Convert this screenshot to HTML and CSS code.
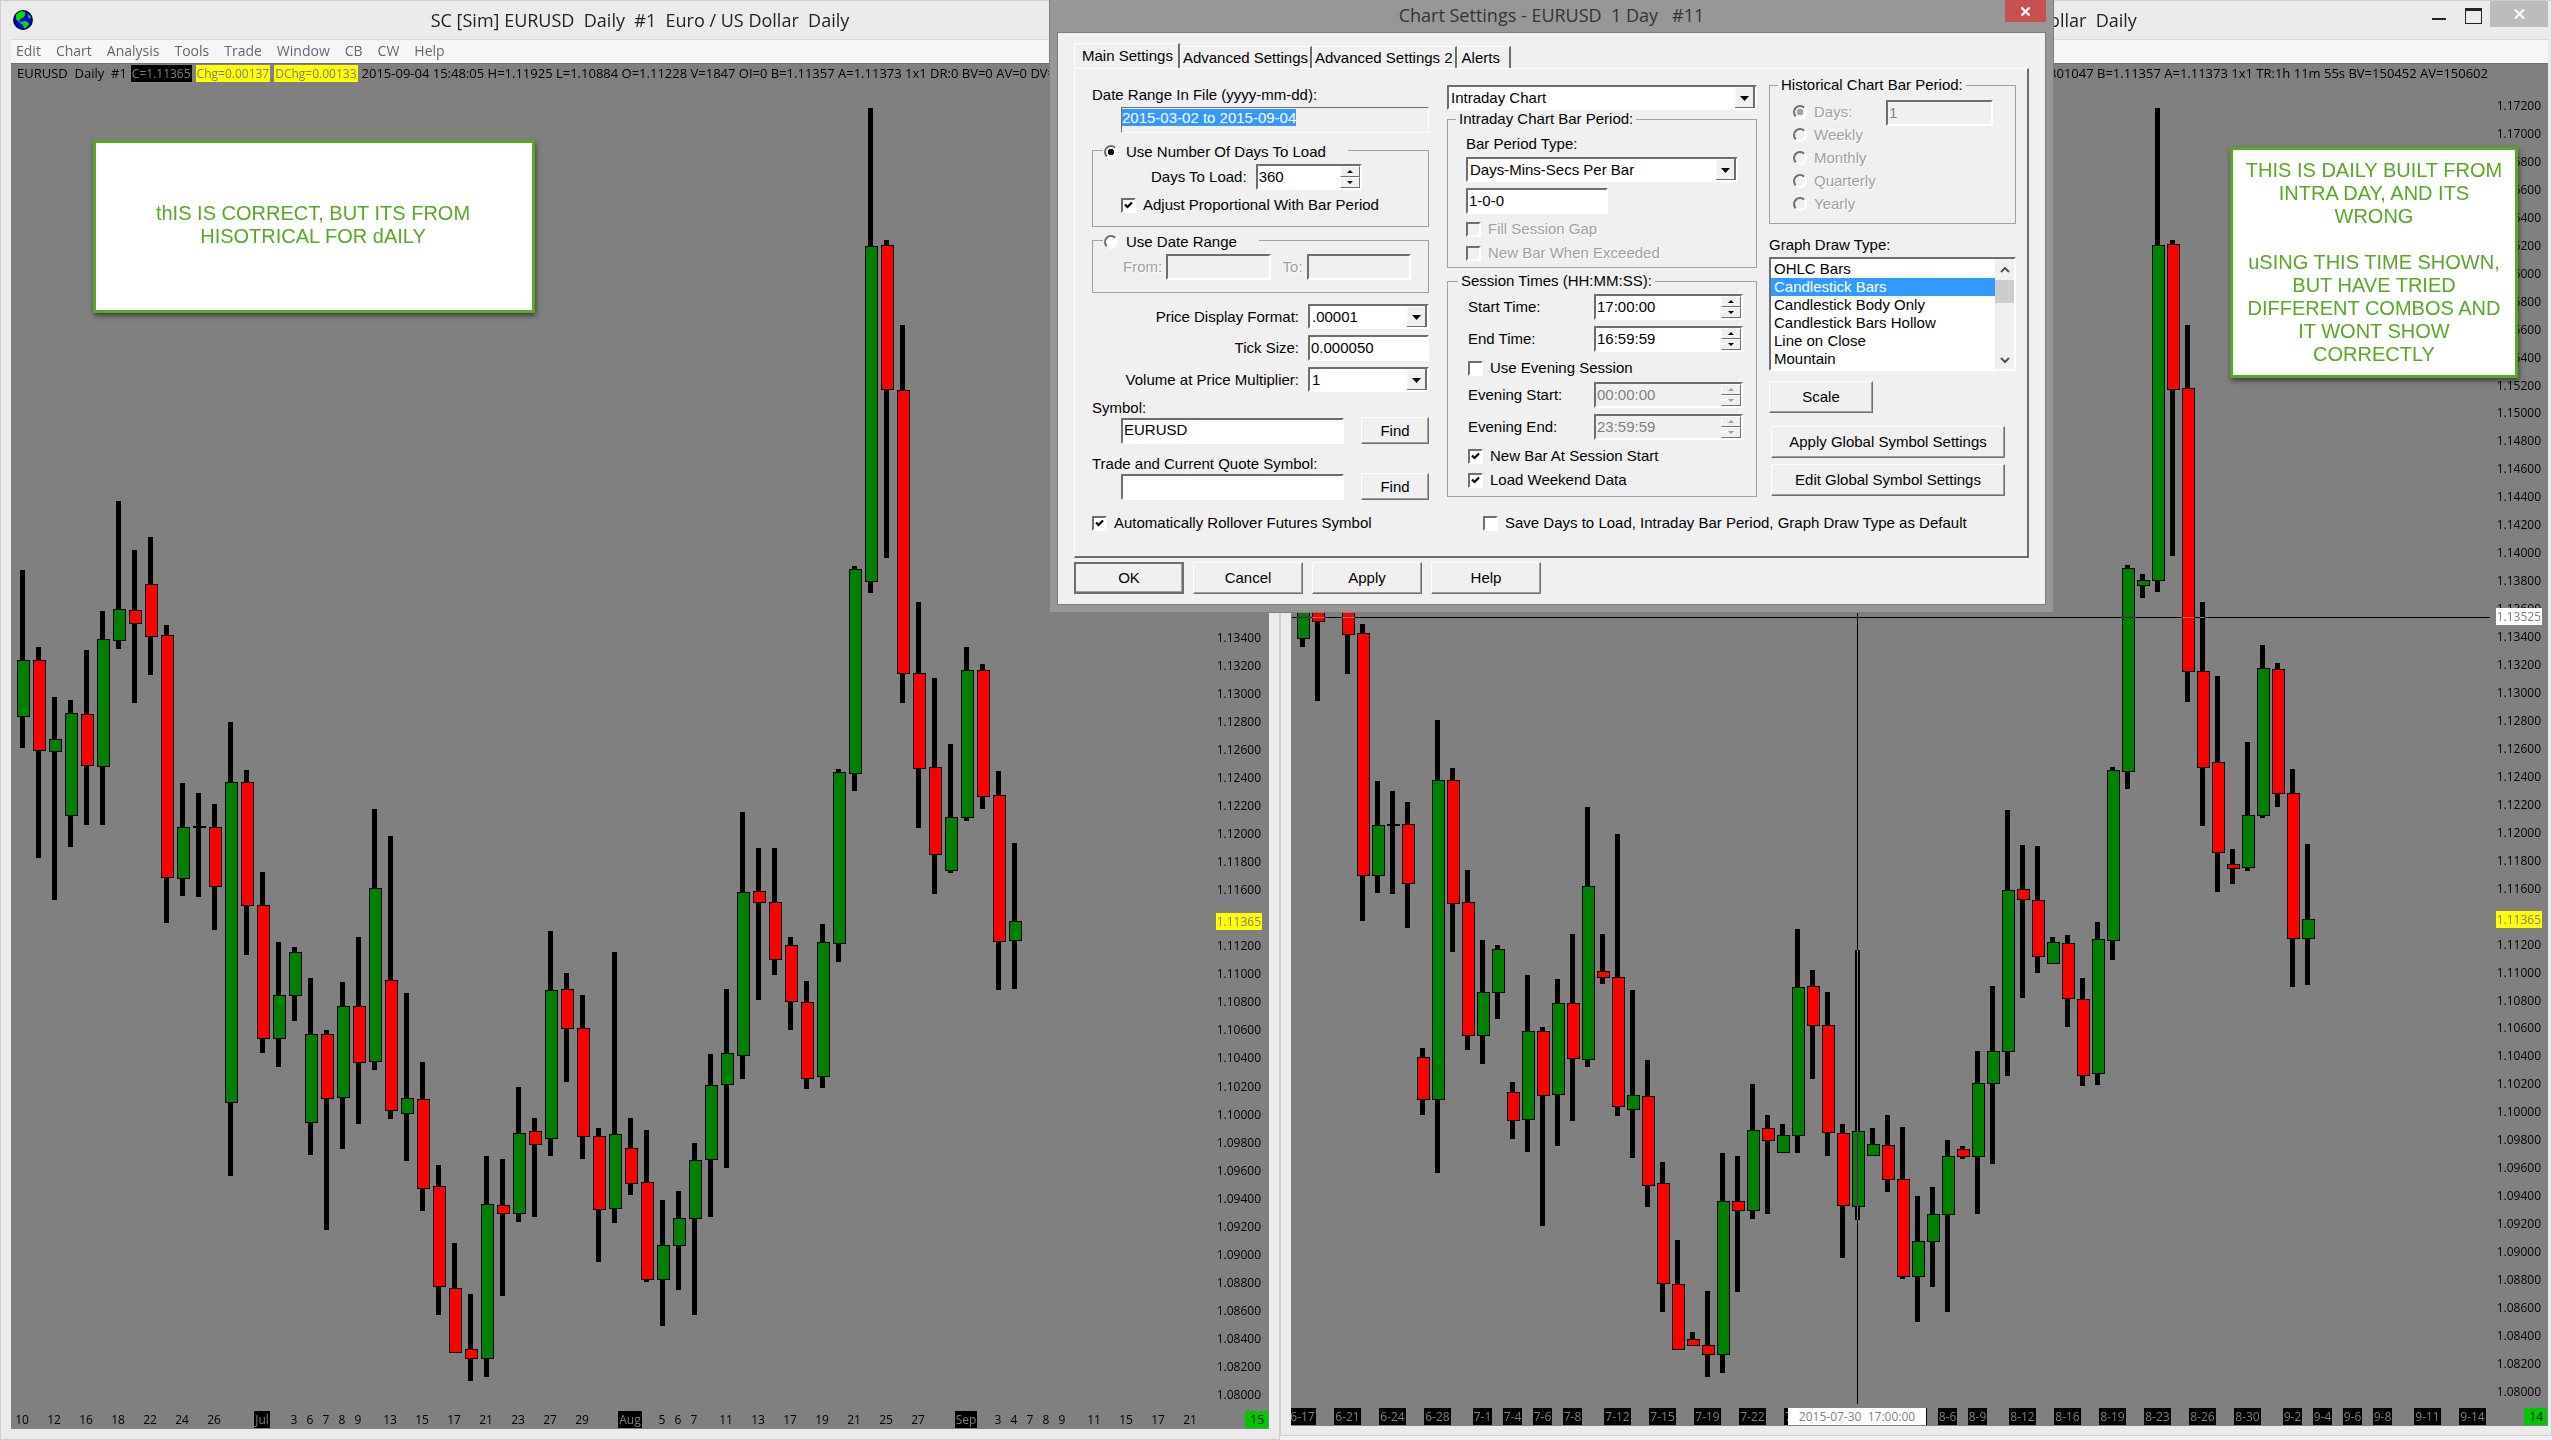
FILE: index.html
```html
<!DOCTYPE html>
<html lang="en">
  <head>
    <meta charset="utf-8" />
    <title>SC [Sim] EURUSD Daily</title>
    <meta name="viewport" content="width=device-width, initial-scale=1.0" />
    <link rel="stylesheet" href="styles.css">
  </head>

  <body>
    <main class="desktop">
      <!-- Daily chart from historical data -->
      <section class="window window-left">
        <header class="title-bar">
          <svg class="globe" width="20" height="20" viewBox="0 0 20 20">
            <circle cx="10" cy="10" r="9.3" fill="#0000e8" stroke="#000" stroke-width="1.2" />
            <path d="M3 5 L6 2 L9 1 L12 2 L12 5 L10 8 L7 9 L6 11 L8 12 L12 11 L15 12 L16 14 L13 18 L11 18 L10 15 L7 13 L3 9 Z" fill="#00e000" />
            <path d="M15 4 L18 7 L17 9 L15 7 Z" fill="#00e000" />
            <path d="M9 9 L11 8 L10 11 Z" fill="#000" />
          </svg>
          <h1 class="title">SC [Sim] EURUSD  Daily  #1  Euro / US Dollar  Daily</h1>
        </header>
        <nav class="menu-bar">
          <a href="#">Edit</a>
          <a href="#">Chart</a>
          <a href="#">Analysis</a>
          <a href="#">Tools</a>
          <a href="#">Trade</a>
          <a href="#">Window</a>
          <a href="#">CB</a>
          <a href="#">CW</a>
          <a href="#">Help</a>
        </nav>
        <div class="chart" id="leftChart">
          <svg class="plot"></svg>
          <div class="info-line">
            <span>EURUSD  Daily  #1</span>
            <span class="tag black">C=1.11365</span>
            <span class="tag yellow">Chg=0.00137</span>
            <span class="tag yellow">DChg=0.00133</span>
            <span>2015-09-04 15:48:05 H=1.11925 L=1.10884 O=1.11228 V=1847 OI=0 B=1.11357 A=1.11373 1x1 DR:0 BV=0 AV=0 DV=0</span>
          </div>
          <div class="price-axis short"></div>
          <div class="date-axis"></div>
          <span class="bar-count">15</span>
          <p class="note note-left">thIS IS CORRECT, BUT ITS FROM HISOTRICAL FOR dAILY</p>
        </div>
      </section>

      <!-- Daily chart built from intraday data -->
      <section class="window window-right">
        <header class="title-bar">
          <h1 class="title">SC [Sim] EURUSD  1 Day  #11  Euro / US Dollar  Daily</h1>
          <div class="window-buttons">
            <button class="minimize" aria-label="Minimize"></button>
            <button class="maximize" aria-label="Maximize"></button>
            <button class="close" aria-label="Close">
              <svg width="11" height="10" viewBox="0 0 11 10"><path d="M1 0.5 L10 9.5 M10 0.5 L1 9.5" stroke="#fff" stroke-width="2" /></svg>
            </button>
          </div>
        </header>
        <nav class="menu-bar"></nav>
        <div class="chart" id="rightChart">
          <svg class="plot"></svg>
          <div class="info-line info-end">
            <span>V=301047 B=1.11357 A=1.11373 1x1 TR:1h 11m 55s BV=150452 AV=150602</span>
          </div>
          <div class="price-axis"></div>
          <div class="date-axis dark"></div>
          <span class="bar-count">14</span>
          <div class="cross-h"></div>
          <div class="cross-v"></div>
          <span class="cross-date">2015-07-30  17:00:00</span>
          <p class="note note-right">THIS IS DAILY BUILT FROM INTRA DAY, AND ITS WRONG<br><br>uSING THIS TIME SHOWN, BUT HAVE TRIED DIFFERENT COMBOS AND IT WONT SHOW CORRECTLY</p>
        </div>
      </section>
    </main>

    <!-- Chart Settings -->
    <form class="dialog" role="dialog" aria-labelledby="dialogTitle">
      <header class="dialog-title">
        <h2 id="dialogTitle">Chart Settings - EURUSD  1 Day   #11</h2>
        <button type="button" class="dialog-close" aria-label="Close">
          <svg width="11" height="9" viewBox="0 0 11 9"><path d="M1.5 0.5 L9.5 8.5 M9.5 0.5 L1.5 8.5" stroke="#fff" stroke-width="2.4" /></svg>
        </button>
      </header>

      <div class="dialog-body">
        <div class="tabs" role="tablist">
          <button type="button" class="tab active" role="tab">Main Settings</button>
          <button type="button" class="tab" role="tab">Advanced Settings</button>
          <button type="button" class="tab" role="tab">Advanced Settings 2</button>
          <button type="button" class="tab" role="tab">Alerts</button>
        </div>

        <div class="panel">
          <div class="columns">
            <div class="col col-data">
              <label for="dateRange">Date Range In File (yyyy-mm-dd):</label>
              <input id="dateRange" class="field range-field" type="text" value="2015-03-02 to 2015-09-04" readonly>

              <fieldset class="days-box">
                <legend class="radio-legend wide">
                  <input type="radio" name="load" id="useDays" checked><label for="useDays">Use Number Of Days To Load</label>
                </legend>
                <div class="row days-row">
                  <label for="days">Days To Load:</label>
                  <span class="spin days-spin">
                    <input id="days" type="text" value="360">
                    <span class="arrows"><button type="button" aria-label="Up"></button><button type="button" aria-label="Down"></button></span>
                  </span>
                </div>
                <label class="check"><input type="checkbox" checked>Adjust Proportional With Bar Period</label>
              </fieldset>

              <fieldset class="dates-box">
                <legend class="radio-legend">
                  <input type="radio" name="load" id="useRange"><label for="useRange">Use Date Range</label>
                </legend>
                <div class="row off">
                  <label for="from">From:</label>
                  <input id="from" class="field" type="text" disabled>
                  <label for="to" class="to-label">To:</label>
                  <input id="to" class="field" type="text" disabled>
                </div>
              </fieldset>

              <div class="format-grid">
                <label for="format">Price Display Format:</label>
                <select id="format"><option>.00001</option></select>
                <label for="tick">Tick Size:</label>
                <input id="tick" class="field" type="text" value="0.000050">
                <label for="multiplier">Volume at Price Multiplier:</label>
                <select id="multiplier"><option>1</option></select>
              </div>

              <label for="symbol" class="symbol-label">Symbol:</label>
              <div class="row symbol-row">
                <input id="symbol" class="field" type="text" value="EURUSD">
                <button type="button" class="btn">Find</button>
              </div>
              <label for="quote" class="quote-label">Trade and Current Quote Symbol:</label>
              <div class="row symbol-row">
                <input id="quote" class="field" type="text">
                <button type="button" class="btn">Find</button>
              </div>
            </div>

            <div class="col col-period">
              <select aria-label="Chart type"><option>Intraday Chart</option></select>
              <fieldset class="intraday-box">
                <legend>Intraday Chart Bar Period:</legend>
                <label for="periodType">Bar Period Type:</label>
                <select id="periodType"><option>Days-Mins-Secs Per Bar</option></select>
                <input class="field period-field" type="text" value="1-0-0" aria-label="Bar period">
                <label class="check off"><input type="checkbox" disabled>Fill Session Gap</label>
                <label class="check off"><input type="checkbox" disabled>New Bar When Exceeded</label>
              </fieldset>
              <fieldset class="session-box">
                <legend>Session Times (HH:MM:SS):</legend>
                <div class="row">
                  <label for="start">Start Time:</label>
                  <span class="spin"><input id="start" type="text" value="17:00:00"><span class="arrows"><button type="button" aria-label="Up"></button><button type="button" aria-label="Down"></button></span></span>
                </div>
                <div class="row">
                  <label for="end">End Time:</label>
                  <span class="spin"><input id="end" type="text" value="16:59:59"><span class="arrows"><button type="button" aria-label="Up"></button><button type="button" aria-label="Down"></button></span></span>
                </div>
                <label class="check"><input type="checkbox">Use Evening Session</label>
                <div class="row">
                  <label for="evStart">Evening Start:</label>
                  <span class="spin"><input id="evStart" type="text" value="00:00:00" disabled><span class="arrows"><button type="button" aria-label="Up" disabled></button><button type="button" aria-label="Down" disabled></button></span></span>
                </div>
                <div class="row">
                  <label for="evEnd">Evening End:</label>
                  <span class="spin"><input id="evEnd" type="text" value="23:59:59" disabled><span class="arrows"><button type="button" aria-label="Up" disabled></button><button type="button" aria-label="Down" disabled></button></span></span>
                </div>
                <label class="check"><input type="checkbox" checked>New Bar At Session Start</label>
                <label class="check"><input type="checkbox" checked>Load Weekend Data</label>
              </fieldset>
            </div>

            <div class="col col-graph">
              <fieldset class="historical-box">
                <legend>Historical Chart Bar Period:</legend>
                <div class="radios off">
                  <label><input type="radio" name="hist" checked disabled>Days:</label>
                  <label><input type="radio" name="hist" disabled>Weekly</label>
                  <label><input type="radio" name="hist" disabled>Monthly</label>
                  <label><input type="radio" name="hist" disabled>Quarterly</label>
                  <label><input type="radio" name="hist" disabled>Yearly</label>
                </div>
                <input class="field" type="text" value="1" aria-label="Number of days" disabled>
              </fieldset>
              <label for="drawType" class="draw-label">Graph Draw Type:</label>
              <div class="list-box">
                <select id="drawType" size="6">
                  <option>OHLC Bars</option>
                  <option selected>Candlestick Bars</option>
                  <option>Candlestick Body Only</option>
                  <option>Candlestick Bars Hollow</option>
                  <option>Line on Close</option>
                  <option>Mountain</option>
                </select>
                <div class="scrollbar">
                  <svg width="10" height="6" viewBox="0 0 10 6"><path d="M1 5 L5 1 L9 5" fill="none" stroke="#505050" stroke-width="2" /></svg>
                  <div class="thumb"></div>
                  <svg width="10" height="6" viewBox="0 0 10 6"><path d="M1 1 L5 5 L9 1" fill="none" stroke="#505050" stroke-width="2" /></svg>
                </div>
              </div>
              <button type="button" class="btn tall scale-btn">Scale</button>
              <button type="button" class="btn tall global-btn">Apply Global Symbol Settings</button>
              <button type="button" class="btn tall global-btn">Edit Global Symbol Settings</button>
            </div>
          </div>

          <div class="panel-checks">
            <label class="check"><input type="checkbox" checked>Automatically Rollover Futures Symbol</label>
            <label class="check"><input type="checkbox">Save Days to Load, Intraday Bar Period, Graph Draw Type as Default</label>
          </div>
        </div>

        <div class="dialog-buttons">
          <button type="button" class="btn tall default">OK</button>
          <button type="button" class="btn tall">Cancel</button>
          <button type="button" class="btn tall">Apply</button>
          <button type="button" class="btn tall">Help</button>
        </div>
      </div>
    </form>

    <script src="chart.js"></script>
  </body>
</html>
```
FILE: styles.css
```css
* {
  box-sizing: border-box;
}

body {
  margin: 0;
  height: 100vh;
  overflow: hidden;
  background-color: #f0f0f0;
  font-family: "Open Sans", "Noto Sans", sans-serif;
  color: #000;
}

h1,
h2,
p {
  margin: 0;
  font-weight: normal;
}

.desktop {
  display: grid;
  grid-template-columns: 1280fr 1272fr;
  height: 100%;
}

/* Application windows */
.window {
  display: flex;
  flex-direction: column;
  min-width: 0;
  background-color: #ebebeb;
  border: 1px solid #cfcfcf;
}

.window-left {
  padding: 0 10px 10px;
}

.window-right {
  padding: 0 3px 9px 10px;
  margin-bottom: 4px;
}

.title-bar {
  position: relative;
  display: flex;
  justify-content: center;
  align-items: center;
  height: 38px;
}

.title {
  font-size: 18px;
  line-height: 24px;
  white-space: pre;
  color: #222;
}

.globe {
  position: absolute;
  left: 2px;
  top: 9px;
}

.window-buttons {
  position: absolute;
  right: 0;
  top: 0;
  display: flex;
}

.window-buttons button {
  position: relative;
  height: 26px;
  padding: 0;
  border: none;
  background: none;
}

.minimize {
  width: 34px;
}

.minimize::after {
  content: "";
  position: absolute;
  left: 4px;
  top: 17px;
  width: 14px;
  height: 2px;
  background-color: #222;
}

.maximize {
  width: 28px;
}

.maximize::after {
  content: "";
  position: absolute;
  left: 3px;
  top: 7px;
  width: 15px;
  height: 12px;
  border: 1px solid #222;
  border-top-width: 3px;
}

.window-buttons .close {
  width: 58px;
  background-color: #bcbcbc;
}

.menu-bar {
  display: flex;
  gap: 15px;
  height: 25px;
  padding-left: 5px;
  background-color: #f5f6f7;
  border-top: 1px solid #d8d8d8;
  border-bottom: 1px solid #6e6e6e;
}

.menu-bar a {
  font-size: 14px;
  line-height: 21px;
  color: #666;
  text-decoration: none;
}

/* Charts */
.chart {
  position: relative;
  flex: 1;
  min-height: 0;
  overflow: hidden;
  background-color: #808080;
  font-size: 12px;
  line-height: 17px;
}

.plot {
  position: absolute;
  width: 100%;
  height: 100%;
  shape-rendering: crispEdges;
}

.plot .wick {
  fill: #000;
}

.plot .up,
.plot .down {
  stroke: #000;
  stroke-width: 1px;
}

.plot .up {
  fill: #008000;
}

.plot .down {
  fill: #f00;
}

.info-line {
  position: relative;
  display: flex;
  gap: 4px;
  padding: 1px 0 0 6px;
  font-size: 13px;
  white-space: pre;
}

.info-end {
  justify-content: flex-end;
  padding-right: 60px;
}

.tag {
  padding: 0 1px;
  font-size: 12px;
  color: #808080;
}

.black {
  background-color: #000;
}

.yellow {
  background-color: #ff0;
}

.price-axis {
  position: absolute;
  top: 33px;
  right: 6px;
  bottom: 26px;
  display: flex;
  flex-direction: column;
  justify-content: space-between;
}

/* The upper part of this scale is under the dialog */
.price-axis.short {
  top: 565px;
  right: 7px;
}

.price-axis span {
  padding: 0 1px;
}

.price-axis .mark {
  position: absolute;
  right: 0;
  color: #808080;
}

.price-axis .last {
  background-color: #ff0;
}

.price-axis .cursor {
  background-color: #fff;
}

.date-axis {
  position: absolute;
  left: 3px;
  bottom: 1px;
  display: grid;
  grid-auto-columns: 16px;
}

.date-axis.dark {
  left: 4px;
  grid-auto-columns: 15px;
}

.date-axis span {
  grid-row: 1;
  justify-self: center;
  padding: 0 1px;
  white-space: nowrap;
}

.dark span,
.date-axis .month {
  background-color: #000;
  color: #808080;
}

.bar-count {
  position: absolute;
  right: 1px;
  bottom: 1px;
  width: 23px;
  padding-right: 4px;
  text-align: right;
  background-color: #00c800;
}

/* Inverts what lies under the cursor lines */
.cross-h,
.cross-v {
  position: absolute;
  background-color: #808080;
  mix-blend-mode: difference;
}

.cross-h {
  left: 1px;
  right: 58px;
  top: 553px;
  height: 1px;
}

.cross-v {
  left: 566px;
  top: 0;
  bottom: 22px;
  width: 1px;
}

.cross-date {
  position: absolute;
  left: 497px;
  bottom: 1px;
  width: 138px;
  text-align: center;
  white-space: pre;
  background-color: #fff;
  color: #808080;
}

.note {
  position: absolute;
  display: flex;
  align-items: center;
  justify-content: center;
  border: 3px solid #5ba529;
  background-color: #fff;
  box-shadow: 1px 3px 5px rgba(0, 0, 0, 0.5);
  font-family: "Liberation Sans", Arial, sans-serif;
  font-size: 20px;
  line-height: 23px;
  text-align: center;
  color: #5ba529;
}

.note-left {
  left: 82px;
  top: 76px;
  width: 442px;
  height: 173px;
  padding: 0 52px 3px 50px;
}

.note-right {
  display: block;
  right: 30px;
  top: 83px;
  width: 288px;
  height: 231px;
  padding: 9px 8px;
}

/* Chart Settings dialog */
.dialog {
  position: absolute;
  left: 1049px;
  top: 0;
  width: 1005px;
  padding: 0 7px 7px;
  background-color: #979797;
  border: 1px solid #808080;
  border-top: none;
  font-family: "Liberation Sans", Arial, sans-serif;
  font-size: 15px;
  line-height: 18px;
}

.dialog-title {
  position: relative;
  height: 32px;
}

.dialog-title h2 {
  font-family: "Open Sans", "Noto Sans", sans-serif;
  font-size: 18px;
  line-height: 30px;
  text-align: center;
  white-space: pre;
  color: #333;
}

.dialog-close {
  position: absolute;
  right: 0;
  top: 0;
  width: 41px;
  height: 22px;
  padding: 0;
  border: none;
  background-color: #c75050;
}

.dialog-body {
  padding: 10px 16px 10px;
  background-color: #f0f0f0;
  border: 1px solid #7c7c7c;
}

.tabs {
  display: flex;
  align-items: flex-end;
  height: 25px;
}

.tab {
  height: 22px;
  padding: 0 2px;
  border: none;
  border-top: 1px solid #fff;
  border-left: 1px solid #fff;
  border-right: 2px solid #6e6e6e;
  background-color: #f0f0f0;
  font: inherit;
}

.tab.active {
  height: 25px;
  padding: 0 5px 0 7px;
}

.tab:last-child {
  padding-left: 4px;
  padding-right: 9px;
}

.panel {
  padding: 7px 12px 23px 17px;
  border: 1px solid #fff;
  border-right: 2px solid #6e6e6e;
  border-bottom: 2px solid #6e6e6e;
}

.columns {
  display: grid;
  grid-template-columns: 337px 310px 247px;
  column-gap: 18px;
}

.col {
  display: flex;
  flex-direction: column;
}

.col-data {
  padding-top: 10px;
}

.col-period {
  padding-top: 9px;
}

.col-graph {
  margin-left: -6px;
  width: 247px;
}

fieldset {
  display: flex;
  flex-direction: column;
  min-width: 0;
  margin: 0;
  padding: 0 18px;
  border: 1px solid #a0a0a0;
}

legend {
  height: 18px;
  margin-left: -10px;
  padding: 0 3px;
}

.row {
  display: flex;
  align-items: center;
}

.off {
  color: #a0a0a0;
  text-shadow: 1px 1px 0 #fff;
}

input,
select,
.btn {
  margin: 0;
  font: inherit;
  color: inherit;
  border-radius: 0;
}

.field,
.spin,
select,
.list-box {
  height: 26px;
  border: 2px solid;
  border-color: #6e6e6e #fff #fff #6e6e6e;
  background-color: #fff;
}

.field {
  min-width: 0;
  padding: 0 1px 2px;
}

.field:disabled {
  background-color: #f0f0f0;
  color: #808080;
}

select {
  height: 25px;
  padding: 0 2px;
  appearance: none;
  background-image: url("data:image/svg+xml,%3Csvg xmlns='http://www.w3.org/2000/svg' width='20' height='22'%3E%3Cpath d='M0 0h20v22H0z' fill='%23f0f0f0'/%3E%3Cpath d='M0 22V0h20' fill='none' stroke='%23fff'/%3E%3Cpath d='M0 21h19V0' fill='none' stroke='%236e6e6e' stroke-width='2'/%3E%3Cpath d='M5 9h9l-4.500 5z'/%3E%3C/svg%3E");
  background-repeat: no-repeat;
  background-position: right top;
}

input[type="checkbox"],
input[type="radio"] {
  appearance: none;
  flex: none;
  width: 15px;
  height: 15px;
  border: 2px solid;
  border-color: #6e6e6e #fff #fff #6e6e6e;
  background-color: #fff;
}

input[type="checkbox"]:checked {
  background-image: url("data:image/svg+xml,%3Csvg xmlns='http://www.w3.org/2000/svg' width='11' height='11'%3E%3Cpath d='M2 4.500l2.500 2.500l4.500-4.500' fill='none' stroke='%23000' stroke-width='2.200'/%3E%3C/svg%3E");
}

input[type="checkbox"]:disabled,
input[type="radio"]:disabled {
  background-color: #f0f0f0;
}

input[type="radio"] {
  width: 14px;
  height: 14px;
  border-radius: 50%;
}

input[type="radio"]:checked {
  background-image: radial-gradient(circle, #000 0 3px, transparent 3px);
}

input[type="radio"]:checked:disabled {
  background-image: radial-gradient(circle, #a0a0a0 0 3px, transparent 3px);
}

.check {
  display: flex;
  align-items: center;
  gap: 7px;
  height: 20px;
}

.spin {
  display: flex;
  width: 149px;
}

.spin input {
  flex: 1;
  min-width: 0;
  padding: 0 1px;
  border: none;
  background-color: #fff;
}

.spin input:disabled {
  background-color: #f0f0f0;
  color: #808080;
}

.arrows {
  display: flex;
  flex-direction: column;
  width: 20px;
}

.arrows button {
  display: flex;
  align-items: center;
  justify-content: center;
  flex: 1;
  padding: 0;
  border: 1px solid;
  border-color: #fff #6e6e6e #6e6e6e #fff;
  background-color: #f0f0f0;
}

.arrows button::after {
  content: "";
  border: 3px solid transparent;
  border-top: none;
  border-bottom: 3px solid #000;
}

.arrows button:last-child::after {
  transform: rotate(180deg);
}

.arrows button:disabled::after {
  border-bottom-color: #a0a0a0;
}

.btn {
  height: 27px;
  padding: 0;
  border: 1px solid;
  border-color: #fff #6e6e6e #6e6e6e #fff;
  box-shadow: inset -1px -1px 0 #a0a0a0;
  background-color: #f0f0f0;
}

.btn.tall {
  height: 32px;
}

.btn.default {
  border: 2px solid #6e6e6e;
}

/* First column */
.range-field {
  width: 308px;
  margin: 3px 0 8px 29px;
  padding: 0 0 6px;
  border-width: 1px;
  background-color: #f0f0f0;
  outline: none;
}

.range-field::selection {
  background-color: #3399ff;
  color: #fff;
}

.radio-legend {
  display: flex;
  align-items: center;
  gap: 8px;
  padding: 4px 22px 0 1px;
}

.days-box {
  padding-bottom: 11px;
  padding-left: 28px;
}

.dates-box .radio-legend {
  margin-left: -20px;
}

.days-box .radio-legend {
  margin-left: -18px;
}

.days-row {
  gap: 9px;
  margin: 5px 0;
  padding-left: 30px;
}

.days-spin {
  width: 106px;
}

.dates-box {
  margin: 4px 0 11px;
  padding: 5px 17px 12px 30px;
}

.dates-box .field {
  flex: 1;
  margin-left: 4px;
}

.to-label {
  margin-left: 12px;
}

.format-grid {
  display: grid;
  grid-template-columns: 1fr 121px;
  align-items: center;
  gap: 6px 9px;
  text-align: right;
}

.symbol-label {
  margin-top: 7px;
}

.quote-label {
  margin-top: 11px;
}

.symbol-row {
  gap: 17px;
  padding-left: 29px;
}

.symbol-row .field {
  flex: 1;
}

.symbol-row .btn {
  width: 68px;
}

/* Second column */
.intraday-box {
  padding-top: 7px;
  padding-bottom: 4px;
}

.intraday-box select {
  margin: 4px 0 6px;
}

.period-field {
  width: 142px;
  margin-bottom: 5px;
}

.intraday-box .check + .check {
  margin-top: 4px;
}

.session-box {
  margin-top: 4px;
  padding: 4px 13px 2px 20px;
}

.session-box .row {
  justify-content: space-between;
  margin-bottom: 6px;
}

.session-box .check {
  margin-bottom: 4px;
}

/* Third column */
.historical-box {
  flex-direction: row;
  justify-content: space-between;
  padding: 6px 22px 8px 23px;
}

.historical-box legend {
  margin-left: -15px;
}

.radios label {
  display: flex;
  align-items: center;
  gap: 7px;
  height: 23px;
}

.historical-box .field {
  width: 107px;
}

.draw-label {
  margin: 12px 0 3px;
}

.list-box {
  display: flex;
  height: 114px;
}

.list-box select {
  flex: 1;
  height: 110px;
  padding: 1px 0 0;
  border: none;
  outline: none;
  background: none;
  overflow: hidden;
}

.list-box option {
  height: 18px;
  min-height: 18px;
  padding: 0 3px;
}

.list-box option:checked {
  background: linear-gradient(#3399ff, #3399ff);
  -webkit-text-fill-color: #fff;
}

.scrollbar {
  display: flex;
  flex-direction: column;
  align-items: center;
  width: 19px;
  padding: 8px 0 6px;
  background-color: #f0f0f0;
}

.thumb {
  width: 19px;
  height: 23px;
  margin: 7px 0 auto;
  background-color: #cdcdcd;
}

.scale-btn {
  width: 104px;
  margin-top: 10px;
}

.global-btn {
  width: 234px;
  margin: 6px 0 0 2px;
}

.scale-btn + .global-btn {
  margin-top: 13px;
}

.panel-checks {
  display: grid;
  grid-template-columns: 391px 1fr;
  margin-top: 13px;
}

.dialog-buttons {
  display: flex;
  gap: 9px;
  margin-top: 4px;
}

.dialog-buttons .btn {
  width: 110px;
}
```
FILE: chart.js
```js
// Each bar: [high, body top, body bottom, low, up]
// Values are screen rows, the plot area starts at row 64
const PLOT_TOP = 64;

const leftBars = [
  [570, 660, 717, 748, 1], [647, 660, 751, 858, 0], [697, 739, 752, 900, 1],
  [700, 713, 816, 847, 1], [650, 714, 766, 825, 0], [611, 639, 767, 825, 1],
  [501, 609, 641, 649, 1], [550, 610, 624, 703, 0], [537, 584, 637, 675, 0],
  [625, 635, 878, 923, 0], [783, 827, 879, 896, 1], [793, 826, 828, 897, 0],
  [804, 827, 887, 930, 0], [722, 782, 1103, 1176, 1], [770, 782, 906, 955, 0],
  [872, 905, 1039, 1053, 0], [942, 995, 1039, 1067, 1], [947, 952, 996, 1021, 1],
  [978, 1034, 1123, 1155, 1], [1030, 1034, 1099, 1230, 0], [982, 1006, 1098, 1149, 1],
  [937, 1006, 1063, 1124, 0], [809, 888, 1062, 1070, 1], [836, 980, 1111, 1119, 0],
  [993, 1098, 1114, 1161, 1], [1062, 1099, 1189, 1211, 0], [1165, 1186, 1287, 1315, 0],
  [1243, 1288, 1353, 1353, 0], [1294, 1349, 1359, 1381, 0], [1156, 1204, 1359, 1377, 1],
  [1159, 1205, 1214, 1296, 0], [1087, 1133, 1214, 1222, 1], [1118, 1131, 1145, 1217, 0],
  [931, 990, 1139, 1156, 1], [973, 989, 1029, 1082, 0], [995, 1028, 1137, 1159, 0],
  [1128, 1136, 1210, 1262, 0], [952, 1134, 1209, 1223, 1], [1118, 1148, 1184, 1195, 0],
  [1130, 1182, 1280, 1282, 0], [1200, 1245, 1280, 1326, 1], [1191, 1218, 1246, 1290, 1],
  [1143, 1160, 1219, 1315, 1], [1054, 1085, 1160, 1217, 1], [989, 1053, 1085, 1168, 1],
  [812, 892, 1056, 1079, 1], [848, 891, 903, 1000, 0], [848, 902, 960, 975, 0],
  [937, 945, 1002, 1030, 0], [981, 1002, 1079, 1089, 0], [924, 942, 1077, 1088, 1],
  [769, 772, 944, 962, 1], [566, 569, 774, 791, 1], [108, 246, 582, 593, 1],
  [240, 245, 390, 558, 0], [325, 390, 674, 703, 0], [602, 673, 769, 828, 0],
  [678, 767, 855, 894, 0], [744, 817, 871, 873, 1], [647, 670, 818, 821, 1],
  [664, 670, 797, 809, 0], [771, 795, 942, 990, 0], [843, 921, 941, 989, 1],
];

const rightBars = [
  [560, 600, 639, 647, 1], [560, 600, 622, 701, 0], [560, 580, 600, 606, 1],
  [560, 600, 635, 674, 0], [624, 633, 876, 921, 0], [781, 825, 876, 893, 1],
  [791, 824, 826, 894, 0], [802, 824, 884, 928, 0], [1048, 1057, 1100, 1115, 0],
  [720, 780, 1100, 1173, 1], [768, 780, 904, 952, 0], [870, 902, 1036, 1050, 0],
  [940, 992, 1036, 1064, 1], [945, 949, 993, 1019, 1], [1082, 1092, 1121, 1139, 0],
  [975, 1031, 1120, 1152, 1], [1027, 1031, 1096, 1226, 0], [979, 1003, 1095, 1146, 1],
  [934, 1003, 1059, 1121, 0], [807, 886, 1060, 1067, 1], [934, 971, 978, 984, 0],
  [834, 977, 1107, 1116, 0], [990, 1095, 1110, 1158, 1], [1060, 1096, 1186, 1207, 0],
  [1162, 1183, 1284, 1312, 0], [1240, 1284, 1350, 1350, 0], [1332, 1339, 1346, 1346, 0],
  [1291, 1345, 1355, 1377, 0], [1153, 1201, 1355, 1373, 1], [1156, 1201, 1211, 1292, 0],
  [1084, 1130, 1211, 1219, 1], [1115, 1128, 1141, 1214, 0], [1124, 1135, 1153, 1153, 1],
  [929, 987, 1136, 1153, 1], [970, 986, 1026, 1079, 0], [992, 1025, 1133, 1156, 0],
  [1124, 1133, 1206, 1258, 0], [950, 1131, 1207, 1220, 1], [1128, 1144, 1156, 1156, 1],
  [1115, 1145, 1180, 1192, 0], [1127, 1179, 1277, 1279, 0], [1196, 1241, 1277, 1322, 1],
  [1187, 1214, 1242, 1287, 1], [1140, 1156, 1215, 1312, 1], [1146, 1149, 1157, 1159, 0],
  [1051, 1083, 1157, 1214, 1], [986, 1051, 1084, 1164, 1], [810, 890, 1052, 1076, 1],
  [845, 889, 900, 998, 0], [846, 900, 957, 973, 0], [937, 942, 964, 964, 1],
  [935, 943, 999, 1027, 0], [978, 999, 1076, 1086, 0], [922, 939, 1074, 1085, 1],
  [767, 770, 941, 960, 1], [565, 568, 772, 789, 1], [574, 580, 586, 598, 1],
  [108, 245, 581, 592, 1], [240, 244, 390, 556, 0], [325, 388, 672, 702, 0],
  [602, 671, 768, 826, 0], [676, 762, 853, 892, 0], [849, 864, 869, 884, 0],
  [742, 815, 868, 871, 1], [645, 668, 816, 818, 1], [663, 669, 794, 807, 0],
  [769, 793, 939, 987, 0], [844, 919, 939, 985, 1],
];

// Date labels: [bar index, text]
const leftDates = [
  [0, "10"], [2, "12"], [4, "16"], [6, "18"], [8, "22"], [10, "24"], [12, "26"],
  [15, "Jul"], [17, "3"], [18, "6"], [19, "7"], [20, "8"], [21, "9"], [23, "13"],
  [25, "15"], [27, "17"], [29, "21"], [31, "23"], [33, "27"], [35, "29"],
  [38, "Aug"], [40, "5"], [41, "6"], [42, "7"], [44, "11"], [46, "13"], [48, "17"],
  [50, "19"], [52, "21"], [54, "25"], [56, "27"], [59, "Sep"], [61, "3"], [62, "4"],
  [63, "7"], [64, "8"], [65, "9"], [67, "11"], [69, "15"], [71, "17"], [73, "21"],
];

const rightDates = [
  [0, "6-17"], [3, "6-21"], [6, "6-24"], [9, "6-28"], [12, "7-1"], [14, "7-4"],
  [16, "7-6"], [18, "7-8"], [21, "7-12"], [24, "7-15"], [27, "7-19"], [30, "7-22"],
  [33, "7-26"], [41, "8-4"], [43, "8-6"], [45, "8-9"], [48, "8-12"], [51, "8-16"],
  [54, "8-19"], [57, "8-23"], [60, "8-26"], [63, "8-30"], [66, "9-2"], [68, "9-4"],
  [70, "9-6"], [72, "9-8"], [75, "9-11"], [78, "9-14"],
];

function drawBars(chart, bars, step) {
  let shapes = "";
  bars.forEach(([high, top, bottom, low, up], i) => {
    const x = 6 + i * step;
    shapes += `<rect class="wick" x="${x + 3}" y="${high - PLOT_TOP}" width="5" height="${low - high}" />`;
    if (bottom - top < 4) {
      shapes += `<rect class="wick" x="${x}" y="${top - PLOT_TOP}" width="13" height="2" />`;
    } else {
      shapes += `<rect class="${up ? "up" : "down"}" x="${x + 0.5}" y="${top - PLOT_TOP + 0.5}" width="12" height="${bottom - top - 1}" />`;
    }
  });
  chart.querySelector(".plot").innerHTML = shapes;
}

function drawPrices(chart, highest, marks) {
  let labels = "";
  for (let price = highest; price >= 108000; price -= 200) {
    // the last price sits on top of 1.11400
    const text = price === 111400 ? "&nbsp;" : (price / 100000).toFixed(5);
    labels += `<span>${text}</span>`;
  }
  marks.forEach(([name, row, text]) => {
    labels += `<span class="mark ${name}" style="top: ${row}px">${text}</span>`;
  });
  chart.querySelector(".price-axis").innerHTML = labels;
}

function drawDates(chart, dates) {
  chart.querySelector(".date-axis").innerHTML = dates
    .map(([i, text]) => {
      const month = isNaN(parseInt(text)) ? ' class="month"' : "";
      return `<span${month} style="grid-column: ${i + 1}">${text}</span>`;
    })
    .join("");
}

const leftChart = document.getElementById("leftChart");
const rightChart = document.getElementById("rightChart");

drawBars(leftChart, leftBars, 16);
drawPrices(leftChart, 113400, [["last", 284, "1.11365"]]);
drawDates(leftChart, leftDates);

drawBars(rightChart, rightBars, 15);
drawPrices(rightChart, 117200, [["last", 814, "1.11365"], ["cursor", 511, "1.13525"]]);
drawDates(rightChart, rightDates);

document.getElementById("dateRange").select();
```
